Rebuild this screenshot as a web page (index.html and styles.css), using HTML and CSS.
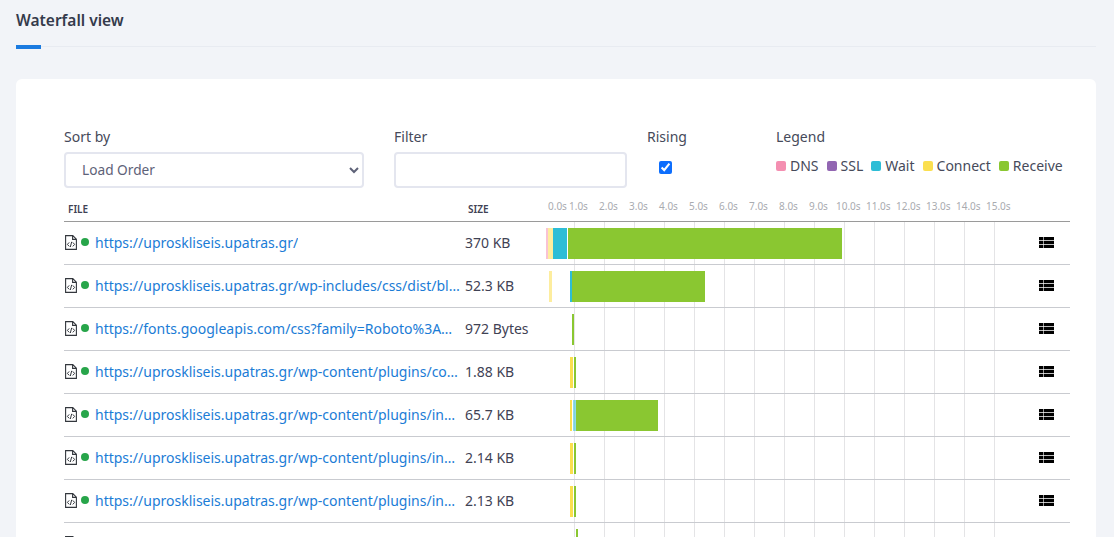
FILE: index.html
```html
<!DOCTYPE html>
<html lang="en">
<head>
<meta charset="utf-8">
<title>Waterfall view</title>
<link rel="stylesheet" href="styles.css">
</head>
<body>
<svg class="defs" width="0" height="0" aria-hidden="true">
  <symbol id="file" viewBox="0 0 12 15">
    <path d="M.6.6h7.2l3.6 3.6v10.2H.6z M7.6.6v3.8h3.8" fill="none" stroke="#33373d" stroke-width="1.1"/>
    <path d="M4.2 7.4 2.4 9.4l1.8 2M7.8 7.4l1.8 2-1.8 2M6.7 6.8 5.3 12" fill="none" stroke="#33373d" stroke-width="1"/>
  </symbol>
  <symbol id="list" viewBox="0 0 15 11">
    <path d="M0 0h4.4v3.2H0zM5 0h10v3.2H5zM0 3.9h4.4v3.2H0zM5 3.9h10v3.2H5zM0 7.8h4.4V11H0zM5 7.8h10V11H5z" fill="#000"/>
  </symbol>
</svg>
<main class="page">
  <header class="title">
    <h2>Waterfall view</h2>
  </header>
  <section class="card">
    <form class="controls">
      <div class="field field-sort">
        <label for="sort">Sort by</label>
        <select id="sort"><option>Load Order</option></select>
      </div>
      <div class="field field-filter">
        <label for="filter">Filter</label>
        <input id="filter" type="text">
      </div>
      <div class="field field-rising">
        <label for="rising">Rising</label>
        <div class="check"><input id="rising" type="checkbox" checked></div>
      </div>
      <div class="field">
        <span class="label">Legend</span>
        <ul class="legend">
          <li><i class="sw dns"></i>DNS</li>
          <li><i class="sw ssl"></i>SSL</li>
          <li><i class="sw wait"></i>Wait</li>
          <li><i class="sw connect"></i>Connect</li>
          <li><i class="sw receive"></i>Receive</li>
        </ul>
      </div>
    </form>

    <div class="table">
      <div class="row head">
        <div class="th th-file">FILE</div>
        <div class="th th-size">SIZE</div>
        <div class="ticks">
          <span style="left:4px">0.0s</span><span style="left:25px">1.0s</span><span style="left:55px">2.0s</span><span style="left:85px">3.0s</span><span style="left:115px">4.0s</span><span style="left:145px">5.0s</span><span style="left:175px">6.0s</span><span style="left:205px">7.0s</span><span style="left:235px">8.0s</span><span style="left:265px">9.0s</span><span style="left:292px">10.0s</span><span style="left:322px">11.0s</span><span style="left:352px">12.0s</span><span style="left:382px">13.0s</span><span style="left:412px">14.0s</span><span style="left:442px">15.0s</span>
        </div>
      </div>

      <div class="row">
        <div class="file"><svg class="ficon"><use href="#file"/></svg><i class="dot"></i><a href="#">https://uproskliseis.upatras.gr/</a></div>
        <div class="size">370 KB</div>
        <div class="track">
          <b class="seg dns soft" style="left:2px;width:2px"></b>
          <b class="seg connect soft" style="left:4px;width:4.5px"></b>
          <b class="seg wait" style="left:8.5px;width:14.5px"></b>
          <b class="seg receive" style="left:23.5px;width:274.5px"></b>
        </div>
        <div class="act"><svg class="licon"><use href="#list"/></svg></div>
      </div>

      <div class="row">
        <div class="file"><svg class="ficon"><use href="#file"/></svg><i class="dot"></i><a href="#">https://uproskliseis.upatras.gr/wp-includes/css/dist/block-library/style.min.css</a></div>
        <div class="size">52.3 KB</div>
        <div class="track">
          <b class="seg connect soft" style="left:4.5px;width:3.5px"></b>
          <b class="seg wait" style="left:26px;width:1.5px"></b>
          <b class="seg receive" style="left:28px;width:133px"></b>
        </div>
        <div class="act"><svg class="licon"><use href="#list"/></svg></div>
      </div>

      <div class="row">
        <div class="file"><svg class="ficon"><use href="#file"/></svg><i class="dot"></i><a href="#">https://fonts.googleapis.com/css?family=Roboto%3Awght%40400</a></div>
        <div class="size">972 Bytes</div>
        <div class="track">
          <b class="seg receive" style="left:27.5px;width:2px"></b>
        </div>
        <div class="act"><svg class="licon"><use href="#list"/></svg></div>
      </div>

      <div class="row">
        <div class="file"><svg class="ficon"><use href="#file"/></svg><i class="dot"></i><a href="#">https://uproskliseis.upatras.gr/wp-content/plugins/contact-form-7/style.css</a></div>
        <div class="size">1.88 KB</div>
        <div class="track">
          <b class="seg connect" style="left:26px;width:2.5px"></b>
          <b class="seg receive" style="left:30px;width:2px"></b>
        </div>
        <div class="act"><svg class="licon"><use href="#list"/></svg></div>
      </div>

      <div class="row">
        <div class="file"><svg class="ficon"><use href="#file"/></svg><i class="dot"></i><a href="#">https://uproskliseis.upatras.gr/wp-content/plugins/instagram-feed/css/sbi.css</a></div>
        <div class="size">65.7 KB</div>
        <div class="track">
          <b class="seg connect" style="left:26px;width:2px"></b>
          <b class="seg wait soft" style="left:29px;width:2.5px"></b>
          <b class="seg receive" style="left:31.5px;width:82.5px"></b>
        </div>
        <div class="act"><svg class="licon"><use href="#list"/></svg></div>
      </div>

      <div class="row">
        <div class="file"><svg class="ficon"><use href="#file"/></svg><i class="dot"></i><a href="#">https://uproskliseis.upatras.gr/wp-content/plugins/instagram-feed/css/a.css</a></div>
        <div class="size">2.14 KB</div>
        <div class="track">
          <b class="seg connect" style="left:26px;width:2.5px"></b>
          <b class="seg receive" style="left:30px;width:2px"></b>
        </div>
        <div class="act"><svg class="licon"><use href="#list"/></svg></div>
      </div>

      <div class="row">
        <div class="file"><svg class="ficon"><use href="#file"/></svg><i class="dot"></i><a href="#">https://uproskliseis.upatras.gr/wp-content/plugins/instagram-feed/css/b.css</a></div>
        <div class="size">2.13 KB</div>
        <div class="track">
          <b class="seg connect" style="left:26px;width:2.5px"></b>
          <b class="seg receive" style="left:30px;width:2px"></b>
        </div>
        <div class="act"><svg class="licon"><use href="#list"/></svg></div>
      </div>

      <div class="row">
        <div class="file"><svg class="ficon"><use href="#file"/></svg></div>
        <div class="size"></div>
        <div class="track">
          <b class="seg receive" style="left:32px;width:2px"></b>
        </div>
        <div class="act"></div>
      </div>
    </div>
  </section>
</main>
</body>
</html>
```
FILE: styles.css
```css
* { box-sizing: border-box; }

html, body {
  margin: 0;
  height: 537px;
  overflow: hidden;
}

body {
  background: #f2f4f8;
  color: #3f4254;
  font-family: "Noto Sans", "Open Sans", sans-serif;
  font-size: 14px;
}

.defs { position: absolute; }

.page { padding: 0 18px 0 16px; }

.title {
  height: 47px;
  border-bottom: 1px solid #e8ebf1;
  position: relative;
  margin-bottom: 32px;
}

.title h2 {
  margin: 0;
  padding-top: 10px;
  font-size: 15.5px;
  line-height: 20px;
  font-weight: 600;
  color: #343a4b;
}

.title::after {
  content: "";
  position: absolute;
  left: 0;
  bottom: -3px;
  width: 25px;
  height: 4px;
  background: #1b7be0;
}

.card {
  background: #fff;
  border-radius: 6px;
  padding: 48px 26px 0 48px;
  height: 520px;
}

.controls {
  display: flex;
  height: 73px;
}

.field { display: flex; flex-direction: column; }
.field-sort { width: 300px; margin-right: 30px; }
.field-filter { width: 233px; margin-right: 20px; }
.field-rising { width: 129px; }

.field label, .label {
  line-height: 20px;
  height: 25px;
  color: #464a5a;
}

select, input[type="text"] {
  height: 36px;
  width: 100%;
  border: 2px solid #e4e6ef;
  border-radius: 4px;
  background: #fff;
  font: inherit;
  color: #5e6278;
}

select { padding: 0 0 2px 12px; font-size: 13.7px; }

.check { padding: 9px 0 0 12px; }
.check input {
  display: block;
  margin: 0;
  width: 13px;
  height: 13px;
  accent-color: #0d6efd;
}

.legend {
  list-style: none;
  display: flex;
  gap: 8px;
  margin: 0;
  padding: 4px 0 0;
  line-height: 19px;
  color: #464a5a;
}

.legend li { display: flex; align-items: center; gap: 4px; }

.sw {
  display: block;
  width: 10px;
  height: 10px;
  border-radius: 2px;
}

.dns { background: #f48fb1; }
.ssl { background: #9266b2; }
.wait { background: #2dbdd6; }
.connect { background: #fbdf4f; }
.receive { background: #8ac731; }

.row {
  display: grid;
  grid-template-columns: 401px 79px 480px 46px;
  height: 43px;
  border-bottom: 1px solid #c9cbd0;
  align-items: center;
}

.row.head {
  height: 22px;
  border-bottom-color: #9a9a9a;
  align-items: start;
}

.th {
  font-size: 10px;
  line-height: 14px;
  font-weight: 600;
  color: #3f4254;
  padding: 2px 0 0 4px;
}

.th-size { padding-left: 3px; }

.ticks {
  position: relative;
  margin-top: -1px;
  font-size: 10px;
  line-height: 14px;
  color: #a9abb0;
}

.ticks span { position: absolute; top: 0; white-space: nowrap; }

.file {
  display: flex;
  align-items: center;
  min-width: 0;
  padding: 0 3.5px 2px 1px;
}

.ficon { width: 12px; height: 15px; flex: none; }

.dot {
  width: 8px;
  height: 8px;
  margin: 0 6px 0 4px;
  border-radius: 50%;
  background: #27a54a;
  flex: none;
}

.file a {
  color: #1b7cd6;
  text-decoration: none;
  white-space: nowrap;
  overflow: hidden;
  text-overflow: ellipsis;
}

.size { color: #3f4254; white-space: nowrap; padding-bottom: 2px; }

.track {
  position: relative;
  height: 42px;
  background-image: repeating-linear-gradient(to right, #e4e4e6 0, #e4e4e6 1px, transparent 1px, transparent 30px);
  background-position: 30px 0;
  background-size: 450px 100%;
  background-repeat: no-repeat;
}

.seg {
  position: absolute;
  top: 6px;
  height: 31px;
}

.soft { opacity: .55; }

.act { display: flex; padding: 0 0 2px 15px; }
.licon { width: 15px; height: 11px; }
```
